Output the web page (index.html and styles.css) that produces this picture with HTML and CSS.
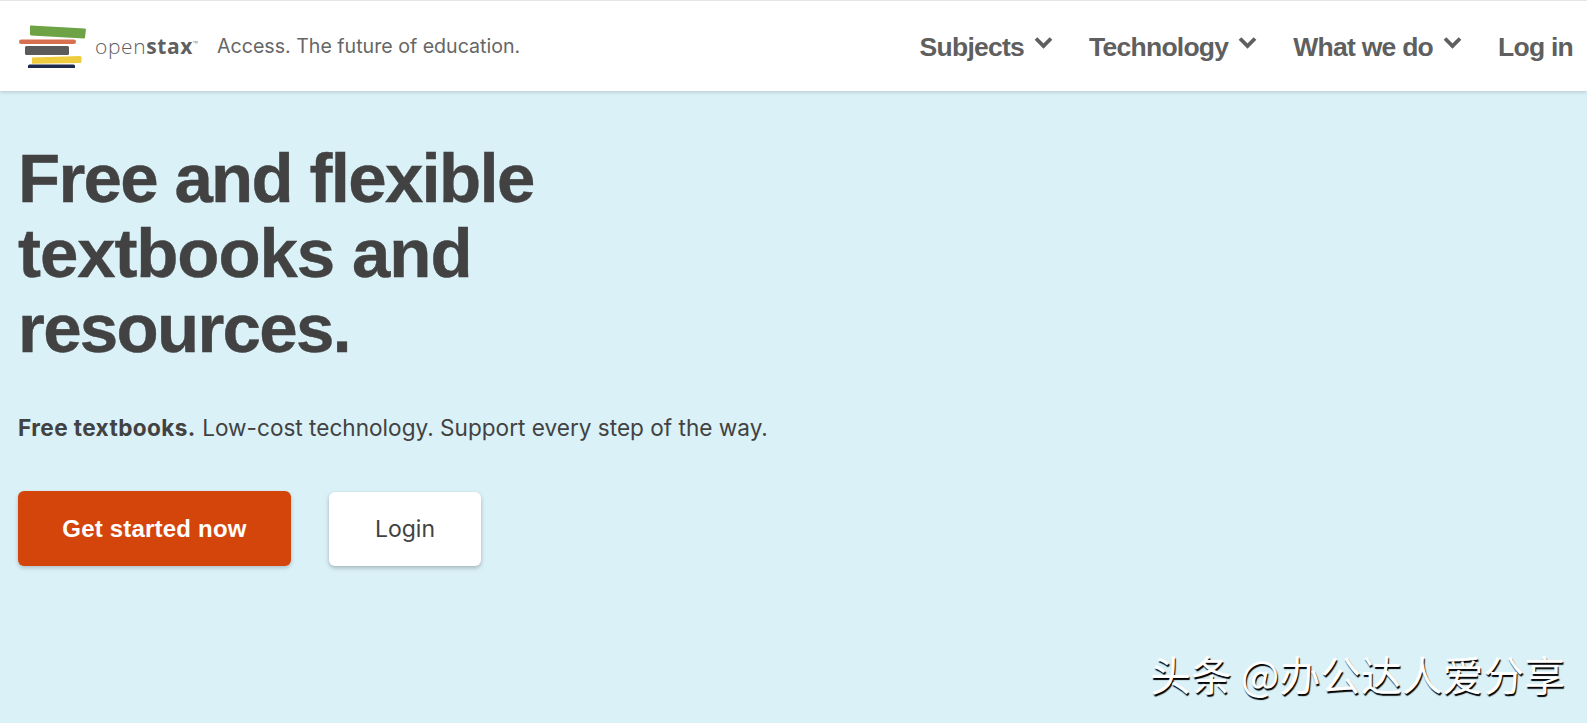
FILE: index.html
```html
<!DOCTYPE html>
<html lang="en">
<head>
  <meta charset="UTF-8" />
  <meta name="viewport" content="width=device-width, initial-scale=1.0"/>
  <title>OpenStax</title>
  <link rel="stylesheet" href="styles.css">
</head>
<body>
  <div class="header">
    <div class="brand">
      <svg class="logo-mark" viewBox="0 0 70 44" width="70" height="44" aria-hidden="true">
        <path d="M13 1.500 L67 4.500 Q68 4.600 67.900 6 L67 13.500 Q66.900 14.600 66 14.600 L13 11.500 Q12 11.400 12 10 L12 2.500 Q12 1.400 13 1.500 Z" fill="#6ea345"/>
        <rect x="1" y="15.500" width="57" height="4.500" rx="2.200" fill="#d86f4e"/>
        <rect x="7" y="22" width="44" height="9" rx="1.500" fill="#5b5b5b"/>
        <path d="M14 33.500 L62 32 Q63.500 32 63.500 33.500 L63.500 37.500 Q63.500 39 62 39 L14 39.800 Z" fill="#eecb3f"/>
        <rect x="10" y="40.500" width="47" height="5.500" rx="1.500" fill="#1e2a4d"/>
      </svg>
      <div class="wordmark">open<b>stax</b><span class="tm">™</span></div>
      <div class="tagline">Access. The future of education.</div>
    </div>
    <div class="menu">
      <a>Subjects <svg class="chevron" viewBox="0 0 19 13" width="19" height="13"><path d="M2 2.500 L9.500 10 L17 2.500" /></svg></a>
      <a>Technology <svg class="chevron" viewBox="0 0 19 13" width="19" height="13"><path d="M2 2.500 L9.500 10 L17 2.500" /></svg></a>
      <a>What we do <svg class="chevron" viewBox="0 0 19 13" width="19" height="13"><path d="M2 2.500 L9.500 10 L17 2.500" /></svg></a>
      <a>Log in</a>
    </div>
  </div>

  <div class="hero">
    <h1>Free and flexible<br><span class="wide">textbooks and</span><br>resources.</h1>
    <p class="lead"><b>Free textbooks.</b> Low-cost technology. Support every step of the way.</p>
    <div class="actions">
      <a class="btn btn-primary">Get started now</a>
      <a class="btn btn-light">Login</a>
    </div>
    <div class="watermark">头条 @办公达人爱分享</div>
  </div>
</body>
</html>
```

FILE: styles.css
```css
html, body {
  height: 100%;
}

body {
  margin: 0;
  font-family: "Liberation Sans", Arial, sans-serif;
  background-color: #daf1f8;
  color: #424242;
  display: flex;
  flex-direction: column;
  overflow: hidden;
}

.header {
  height: 91px;
  flex: none;
  box-sizing: border-box;
  border-top: 1px solid #e3e5e6;
  background-color: #fff;
  box-shadow: 0 1px 4px rgba(0, 0, 0, 0.18);
  display: flex;
  justify-content: space-between;
  align-items: center;
  padding: 0 14px 0 18px;
}

.brand {
  display: flex;
  align-items: center;
}

.logo-mark {
  flex: none;
  margin-right: 7px;
}

.wordmark {
  font-family: "Open Sans", sans-serif;
  font-size: 21px;
  letter-spacing: 0.6px;
  color: #5f5f5f;
  font-weight: 300;
  margin-right: 19px;
}

.wordmark b {
  font-weight: 700;
  color: #5f5f5f;
}

.tm {
  font-size: 7px;
  vertical-align: 8px;
  letter-spacing: 0;
}

.tagline {
  font-family: "Inter", sans-serif;
  font-size: 19.600px;
  color: #666;
}

.menu {
  display: flex;
  gap: 36px;
}

.menu a {
  font-size: 26.500px;
  line-height: 34px;
  padding-top: 1px;
  font-weight: bold;
  letter-spacing: -0.750px;
  color: #5f5f5f;
  display: flex;
  align-items: center;
  gap: 10px;
  white-space: nowrap;
}

.chevron {
  fill: none;
  stroke: #5f5f5f;
  stroke-width: 3.800;
  margin-top: -9px;
}

.hero {
  position: relative;
  flex: 1;
  padding: 50px 18px 0;
}

h1 {
  margin: 0;
  font-size: 69px;
  line-height: 75px;
  font-weight: bold;
  letter-spacing: -1.700px;
  color: #424242;
  -webkit-text-stroke: 0.400px #424242;
}

h1 .wide {
  letter-spacing: -1.100px;
}

.lead {
  margin: 45px 0 0;
  font-family: "Inter", sans-serif;
  font-size: 22.600px;
  line-height: 34px;
  color: #424242;
}

.lead b {
  letter-spacing: 0.400px;
}

.actions {
  display: flex;
  align-items: center;
  gap: 38px;
  margin-top: 46px;
}

.btn {
  display: flex;
  align-items: center;
  justify-content: center;
  box-sizing: border-box;
  border-radius: 6px;
  font-size: 23px;
  font-family: "Inter", sans-serif;
}

.btn-primary {
  width: 273px;
  height: 75px;
  background-color: #d4450c;
  color: #fff;
  font-weight: bold;
  font-size: 24px;
  letter-spacing: 0.200px;
  font-family: "Liberation Sans", Arial, sans-serif;
  box-shadow: 0 2px 4px rgba(0, 0, 0, 0.2);
}

.btn-light {
  width: 152px;
  height: 74px;
  background-color: #fff;
  color: #424242;
  box-shadow: 0 2px 4px rgba(0, 0, 0, 0.25);
}

.watermark {
  position: absolute;
  right: 22px;
  bottom: 23px;
  font-family: "Noto Sans CJK SC", sans-serif;
  font-size: 40.800px;
  line-height: 52px;
  color: #fff;
  text-shadow: 1px 2px 1px #000;
  white-space: nowrap;
}
```
